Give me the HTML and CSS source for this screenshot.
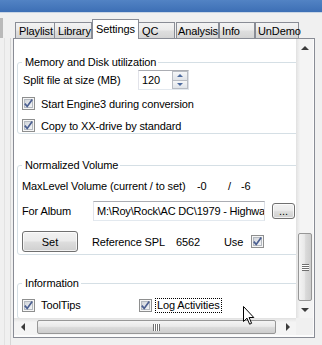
FILE: index.html
```html
<!DOCTYPE html>
<html lang="en">
<head>
  <meta charset="UTF-8">
  <meta name="viewport" content="width=device-width, initial-scale=1.0">
  <title>Settings</title>
  <link rel="stylesheet" href="styles.css">
</head>
<body>

<svg class="sprite" width="0" height="0">
  <defs>
    <linearGradient id="cbFill" x1="0" y1="0" x2="1" y2="1">
      <stop offset="0" stop-color="#cfd3d9"/>
      <stop offset="1" stop-color="#f7f8f9"/>
    </linearGradient>
    <symbol id="cb" viewBox="0 0 13 13">
      <rect x="0.5" y="0.5" width="12" height="12" fill="#f6f6f6" stroke="#8e8f8f"/>
      <rect x="2.5" y="2.5" width="8" height="8" fill="url(#cbFill)" stroke="#b4b9c0"/>
      <path d="M2.8 6.6 L5.2 9.4 L10.2 2.6" fill="none" stroke="#4b5f91" stroke-width="1.7"/>
    </symbol>
  </defs>
</svg>

<div class="titlebar"></div>

<div class="main">
  <div class="side">
    <div class="side-knob"></div>
    <div class="side-lines"></div>
  </div>

  <div class="tabctl">
    <div class="tabstrip">
      <div class="tab t-playlist">Playlist</div>
      <div class="tab t-library">Library</div>
      <div class="tab active t-settings">Settings</div>
      <div class="tab t-qc">QC</div>
      <div class="tab t-analysis">Analysis</div>
      <div class="tab t-info">Info</div>
      <div class="tab t-undemo">UnDemo</div>
    </div>

    <div class="panel">
      <div class="view">
        <div class="content">

          <fieldset class="group g-memory">
            <legend>Memory and Disk utilization</legend>
            <div class="row row-split">
              <span class="lbl-split">Split file at size (MB)</span>
              <div class="spin">
                <span class="spin-val">120</span>
                <div class="spin-btns">
                  <div class="spin-btn"><span class="tri-up small"></span></div>
                  <div class="spin-btn"><span class="tri-down small"></span></div>
                </div>
              </div>
            </div>
            <label class="check-row cr-1">
              <svg class="cb" width="13" height="13"><use href="#cb"/></svg>
              <span>Start Engine3 during conversion</span>
            </label>
            <label class="check-row cr-2">
              <svg class="cb" width="13" height="13"><use href="#cb"/></svg>
              <span>Copy to XX-drive by standard</span>
            </label>
          </fieldset>

          <fieldset class="group g-volume">
            <legend>Normalized Volume</legend>
            <div class="row row-max">
              <span class="lbl-max">MaxLevel Volume (current / to set)</span>
              <span class="val-cur">-0</span>
              <span class="val-sep">/</span>
              <span>-6</span>
            </div>
            <div class="row row-album">
              <span class="lbl-album">For Album</span>
              <div class="textbox"><span class="textbox-val">M:\Roy\Rock\AC DC\1979 - Highwa</span></div>
              <button class="btn btn-browse">...</button>
            </div>
            <div class="row row-set">
              <button class="btn btn-set">Set</button>
              <span class="lbl-spl">Reference SPL</span>
              <span class="val-spl">6562</span>
              <span class="lbl-use">Use</span>
              <svg class="cb" width="13" height="13"><use href="#cb"/></svg>
            </div>
          </fieldset>

          <fieldset class="group g-info">
            <legend>Information</legend>
            <div class="row row-info">
              <label class="check-item ci-tooltips">
                <svg class="cb" width="13" height="13"><use href="#cb"/></svg>
                <span>ToolTips</span>
              </label>
              <label class="check-item">
                <svg class="cb" width="13" height="13"><use href="#cb"/></svg>
                <span class="focus">Log Activities</span>
              </label>
            </div>
          </fieldset>

        </div>

        <div class="vscroll">
          <div class="sb-btn"><span class="tri-up"></span></div>
          <div class="vtrack">
            <div class="vthumb"><span class="grip-v"></span></div>
          </div>
          <div class="sb-btn"><span class="tri-down"></span></div>
        </div>

        <div class="hscroll">
          <div class="sb-btn"><span class="tri-left"></span></div>
          <div class="htrack">
            <div class="hthumb"><span class="grip-h"></span></div>
          </div>
          <div class="sb-btn"><span class="tri-right"></span></div>
        </div>

        <div class="corner"></div>
      </div>
    </div>
  </div>
</div>

<svg class="cursor" width="13" height="20" viewBox="0 0 13 20">
  <path d="M0.5 0.5 L0.5 15.5 L4 12.2 L6.6 18.2 L8.6 17.3 L6.1 11.5 L10.8 11.5 Z" fill="#fff" stroke="#000" stroke-width="1"/>
</svg>

</body>
</html>
```

FILE: styles.css
```css
body {
  margin: 0;
  width: 322px;
  height: 345px;
  overflow: hidden;
  position: relative;
  background: #f0f0f0;
  font-family: "Liberation Sans", Arial, sans-serif;
  font-size: 11px;
  letter-spacing: -0.12px;
  color: #000;
}
.sprite {
  position: absolute;
}
.titlebar {
  height: 12px;
  background: linear-gradient(#5283c4, #3d6fb5);
  border-bottom: 1px solid #c9d5e4;
}
.main {
  display: flex;
  height: 332px;
}

/* left splitter */
.side {
  width: 13px;
  display: flex;
  flex-direction: column;
}
.side-knob {
  width: 3px;
  height: 20px;
  margin-top: 5px;
  background: #b9b9b9;
}
.side-lines {
  flex: 1;
  width: 5px;
  margin-left: 4px;
  border-left: 1px solid #e2e2e2;
  border-right: 1px solid #d6d6d6;
}

/* tabs */
.tabctl {
  width: 302px;
  display: flex;
  flex-direction: column;
}
.tabstrip {
  height: 25px;
  display: flex;
  align-items: flex-end;
  padding-left: 2px;
  position: relative;
  z-index: 1;
}
.tab {
  box-sizing: border-box;
  height: 16px;
  padding: 1px 0 0 3px;
  line-height: 14px;
  white-space: nowrap;
  border: 1px solid #898c95;
  border-bottom: none;
  background: linear-gradient(#f3f3f3 0%, #ebebeb 45%, #dedede 55%, #d4d4d4 100%);
}
.tab.active {
  height: 20px;
  margin-bottom: -1px;
  padding-top: 2px;
  background: #fff;
}
.t-playlist { width: 40px; }
.t-library { width: 38px; margin-left: -1px; }
.t-settings { width: 47px; padding-left: 3px; }
.t-qc { width: 37px; margin-left: -1px; }
.t-analysis { width: 43px; margin-left: 1px; padding-left: 1px; }
.t-info { width: 36px; padding-left: 2px; }
.t-undemo { width: 44px; padding-left: 2px; }

.panel {
  box-sizing: border-box;
  height: 300px;
  border: 1px solid #898c95;
  padding: 0 1px 2px 0;
  background: #fcfcfc;
}
.view {
  display: grid;
  grid-template-columns: 282px 17px;
  grid-template-rows: 279px 17px;
}
.content {
  overflow: hidden;
  background: #fff;
  padding: 17px 0 0 3px;
}

/* group boxes */
.group {
  box-sizing: border-box;
  width: 300px;
  margin: 0;
  border: 1px solid #d5dfe5;
  border-radius: 3px;
  padding: 0 0 2px 4px;
}
.group legend {
  padding: 0 2px 0 3px;
  line-height: 13px;
}
.g-memory {
  padding-bottom: 1px;
}
.g-volume {
  margin-top: 25px;
  padding-bottom: 2px;
}
.g-info {
  margin-top: 22px;
  padding-bottom: 6px;
}
.row {
  display: flex;
  align-items: center;
}
.row-split {
  height: 20px;
  margin-top: 1px;
}
.lbl-split {
  width: 116px;
  padding-left: 1px;
  box-sizing: border-box;
}
.spin {
  box-sizing: border-box;
  width: 51px;
  height: 20px;
  display: flex;
  border: 1px solid #abadb3;
  border-color: #abadb3 #dbdfe6 #e3e9ef #e2e3ea;
}
.spin-val {
  flex: 1;
  padding: 2px 0 0 3px;
  line-height: 14px;
}
.spin-btns {
  width: 16px;
  display: flex;
  flex-direction: column;
}
.spin-btn {
  flex: 1;
  display: flex;
  align-items: center;
  justify-content: center;
  border: 1px solid #b8bcc3;
  background: linear-gradient(#f6f7f8, #dfe3e8);
}
.spin-btn + .spin-btn {
  border-top: none;
}
.check-row {
  display: flex;
  align-items: center;
  height: 13px;
}
.check-row .cb {
  margin-right: 6px;
}
.cr-1 {
  margin-top: 7px;
}
.cr-2 {
  margin-top: 9px;
}

.row-max {
  height: 13px;
  margin-top: 7px;
}
.lbl-max {
  width: 175px;
}
.val-cur {
  width: 31px;
}
.val-sep {
  width: 13px;
}
.row-album {
  height: 20px;
  margin-top: 9px;
}
.lbl-album {
  width: 71px;
}
.textbox {
  box-sizing: border-box;
  width: 172px;
  height: 20px;
  padding: 2px 0 0 3px;
  line-height: 14px;
  white-space: nowrap;
  overflow: hidden;
  border: 1px solid #abadb3;
  border-color: #abadb3 #dbdfe6 #e3e9ef #e2e3ea;
}
.textbox-val {
  letter-spacing: -0.2px;
}
.btn {
  box-sizing: border-box;
  font: inherit;
  color: #000;
  padding: 0;
  border: 1px solid #707070;
  border-radius: 3px;
  background: linear-gradient(#f2f2f2 0%, #ebebeb 45%, #dddddd 55%, #cfcfcf 100%);
  box-shadow: inset 0 0 0 1px rgba(255, 255, 255, 0.7);
}
.btn-browse {
  width: 23px;
  height: 16px;
  margin-left: 7px;
  line-height: 10px;
}
.row-set {
  height: 21px;
  margin-top: 10px;
}
.btn-set {
  width: 56px;
  height: 21px;
}
.lbl-spl {
  width: 84px;
  margin-left: 14px;
}
.val-spl {
  width: 48px;
}
.lbl-use {
  width: 27px;
}

.row-info {
  margin-top: 8px;
  height: 14px;
}
.check-item {
  display: flex;
  align-items: center;
}
.check-item .cb {
  margin-right: 6px;
}
.ci-tooltips {
  width: 117px;
}
.check-item .focus {
  margin-left: -2px;
  padding: 0 1px;
  line-height: 13px;
  outline: 1px dotted #000;
}

/* scrollbars */
.vscroll {
  display: flex;
  flex-direction: column;
  background: linear-gradient(to right, #e6e6e6, #f4f4f4 20%, #f4f4f4);
  border-left: 1px solid #e3e3e3;
  box-sizing: border-box;
}
.hscroll {
  display: flex;
  background: linear-gradient(#e6e6e6, #f4f4f4 20%, #f4f4f4);
  border-top: 1px solid #e3e3e3;
  box-sizing: border-box;
}
.corner {
  background: #f0f0f0;
}
.sb-btn {
  width: 17px;
  height: 17px;
  flex: none;
  display: flex;
  align-items: center;
  justify-content: center;
}
.vscroll .sb-btn {
  width: 16px;
}
.hscroll .sb-btn {
  height: 16px;
}
.vtrack {
  flex: 1;
  display: flex;
  flex-direction: column;
  justify-content: flex-end;
}
.vthumb {
  box-sizing: border-box;
  height: 68px;
  margin: 0 1px;
  border: 1px solid #979797;
  border-radius: 2px;
  background: linear-gradient(to right, #f4f4f4, #e9e9e9 45%, #dadada 55%, #cdcdcd);
  display: flex;
  align-items: center;
  justify-content: center;
}
.htrack {
  flex: 1;
  display: flex;
  padding: 1px 3px 0 6px;
}
.hthumb {
  box-sizing: border-box;
  flex: 1;
  height: 14px;
  border: 1px solid #979797;
  border-radius: 2px;
  background: linear-gradient(#f4f4f4, #e9e9e9 45%, #dadada 55%, #cdcdcd);
  display: flex;
  align-items: center;
  justify-content: center;
}
.grip-v {
  width: 7px;
  height: 7px;
  background: repeating-linear-gradient(#6f6f6f 0 1px, #fff 1px 2px);
}
.grip-h {
  width: 7px;
  height: 7px;
  background: repeating-linear-gradient(to right, #6f6f6f 0 1px, #fff 1px 2px);
}
.tri-up, .tri-down, .tri-left, .tri-right {
  width: 0;
  height: 0;
  border: 4px solid transparent;
}
.tri-up {
  border-top: none;
  border-bottom: 4px solid #3c3c3c;
}
.tri-down {
  border-bottom: none;
  border-top: 4px solid #3c3c3c;
}
.tri-left {
  border-left: none;
  border-right: 4px solid #3c3c3c;
}
.tri-right {
  border-right: none;
  border-left: 4px solid #3c3c3c;
}
.tri-up.small {
  border-width: 0 3px 3px;
  border-bottom-color: #4d6a9e;
}
.tri-down.small {
  border-width: 3px 3px 0;
  border-top-color: #4d6a9e;
}

.cursor {
  position: absolute;
  left: 243px;
  top: 306px;
}
```
